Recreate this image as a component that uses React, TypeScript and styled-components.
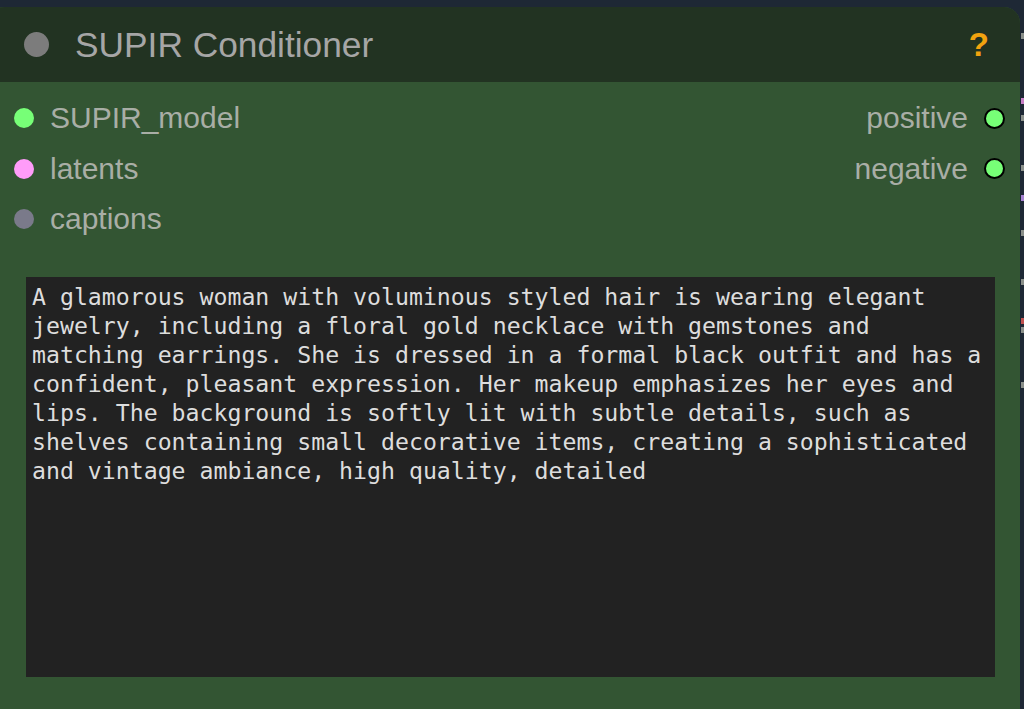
import React from "react";
import styled, { createGlobalStyle } from "styled-components";

const Global = createGlobalStyle`
  html, body { margin: 0; padding: 0; background: #1e2835; }
  body { font-family: "Liberation Sans", Arial, sans-serif; }
`;

const Canvas = styled.div`
  width: 1024px;
  height: 709px;
  overflow: hidden;
  background: #1e2835;
  display: flex;
  position: relative;
`;

const Node = styled.div`
  flex: 0 0 1032px;
  margin-left: -12px;
  margin-top: 7px;
  display: flex;
  flex-direction: column;
  background: #335533;
  border-radius: 16px 16px 0 0;
  overflow: hidden;
`;

const TitleBar = styled.div`
  height: 75px;
  flex: 0 0 75px;
  background: #223322;
  display: flex;
  align-items: center;
  padding: 0 31px 0 36px;
`;

const TitleDot = styled.span`
  width: 25px;
  height: 25px;
  border-radius: 50%;
  background: #7c7c7c;
  flex: 0 0 25px;
`;

const TitleText = styled.span`
  margin-left: 26px;
  font-size: 35.3px;
  color: #a6a6a6;
  flex: 1;
  line-height: 1;
`;

const Help = styled.span`
  font-size: 33px;
  font-weight: bold;
  color: #f2a30f;
  font-family: "Liberation Sans", Arial, sans-serif;
  line-height: 1;
`;

const Slots = styled.div`
  display: flex;
  justify-content: space-between;
  padding: 11px 15px 0 26px;
`;

const SlotColumn = styled.div<{ $right?: boolean }>`
  display: flex;
  flex-direction: column;
  align-items: ${(p) => (p.$right ? "flex-end" : "flex-start")};
`;

const SlotRow = styled.div<{ $right?: boolean }>`
  height: 50.5px;
  display: flex;
  align-items: center;
  flex-direction: ${(p) => (p.$right ? "row-reverse" : "row")};
  gap: 16px;
`;

const SlotDot = styled.span<{ $color: string; $outlined?: boolean }>`
  width: ${(p) => (p.$outlined ? "21px" : "20px")};
  height: ${(p) => (p.$outlined ? "21px" : "20px")};
  flex: 0 0 auto;
  border-radius: 50%;
  box-sizing: border-box;
  background: ${(p) => p.$color};
  border: ${(p) => (p.$outlined ? "2px solid #000" : "none")};
`;

const SlotLabel = styled.span`
  font-size: 30px;
  color: #a9aea6;
  line-height: 1;
`;

const WidgetArea = styled.div`
  padding: 32px 25px 0 38px;
  flex: 1;
  display: flex;
  flex-direction: column;
`;

const PromptBox = styled.textarea`
  width: 969px;
  height: 400px;
  box-sizing: border-box;
  background: #222222;
  color: #dddddd;
  border: none;
  outline: none;
  resize: none;
  overflow: hidden;
  margin: 0;
  padding: 5px 6px 5px 6px;
  font-family: "DejaVu Sans Mono", "Liberation Mono", monospace;
  font-size: 23.2px;
  line-height: 29px;
  white-space: pre-wrap;
`;

const EdgeStrip = styled.div`
  flex: 1;
  position: relative;
`;

const EdgeMark = styled.span<{ $top: number; $color: string }>`
  position: absolute;
  right: 0;
  top: ${(p) => p.$top}px;
  width: 3px;
  height: 6px;
  background: ${(p) => p.$color};
`;

const marks: { top: number; color: string }[] = [
  { top: 33, color: "#8a8f8a" },
  { top: 98, color: "#c77fc7" },
  { top: 115, color: "#8a8f8a" },
  { top: 165, color: "#8a8f8a" },
  { top: 195, color: "#a47fd0" },
  { top: 230, color: "#8a8f8a" },
  { top: 279, color: "#8a8f8a" },
  { top: 318, color: "#c05050" },
  { top: 327, color: "#8a8f8a" },
  { top: 382, color: "#8a8f8a" },
];

const prompt =
  "A glamorous woman with voluminous styled hair is wearing elegant jewelry, including a floral gold necklace with gemstones and matching earrings. She is dressed in a formal black outfit and has a confident, pleasant expression. Her makeup emphasizes her eyes and lips. The background is softly lit with subtle details, such as shelves containing small decorative items, creating a sophisticated and vintage ambiance, high quality, detailed";

export default function App() {
  return (
    <>
      <Global />
      <Canvas>
        <Node>
          <TitleBar>
            <TitleDot />
            <TitleText>SUPIR Conditioner</TitleText>
            <Help>?</Help>
          </TitleBar>
          <Slots>
            <SlotColumn>
              <SlotRow>
                <SlotDot $color="#77ff77" />
                <SlotLabel>SUPIR_model</SlotLabel>
              </SlotRow>
              <SlotRow>
                <SlotDot $color="#ff9cf9" />
                <SlotLabel>latents</SlotLabel>
              </SlotRow>
              <SlotRow>
                <SlotDot $color="#7a7a8a" />
                <SlotLabel>captions</SlotLabel>
              </SlotRow>
            </SlotColumn>
            <SlotColumn $right>
              <SlotRow $right>
                <SlotDot $color="#77ff77" $outlined />
                <SlotLabel>positive</SlotLabel>
              </SlotRow>
              <SlotRow $right>
                <SlotDot $color="#77ff77" $outlined />
                <SlotLabel>negative</SlotLabel>
              </SlotRow>
            </SlotColumn>
          </Slots>
          <WidgetArea>
            <PromptBox readOnly defaultValue={prompt} spellCheck={false} />
          </WidgetArea>
        </Node>
        <EdgeStrip>
          {marks.map((m, i) => (
            <EdgeMark key={i} $top={m.top} $color={m.color} />
          ))}
        </EdgeStrip>
      </Canvas>
    </>
  );
}
